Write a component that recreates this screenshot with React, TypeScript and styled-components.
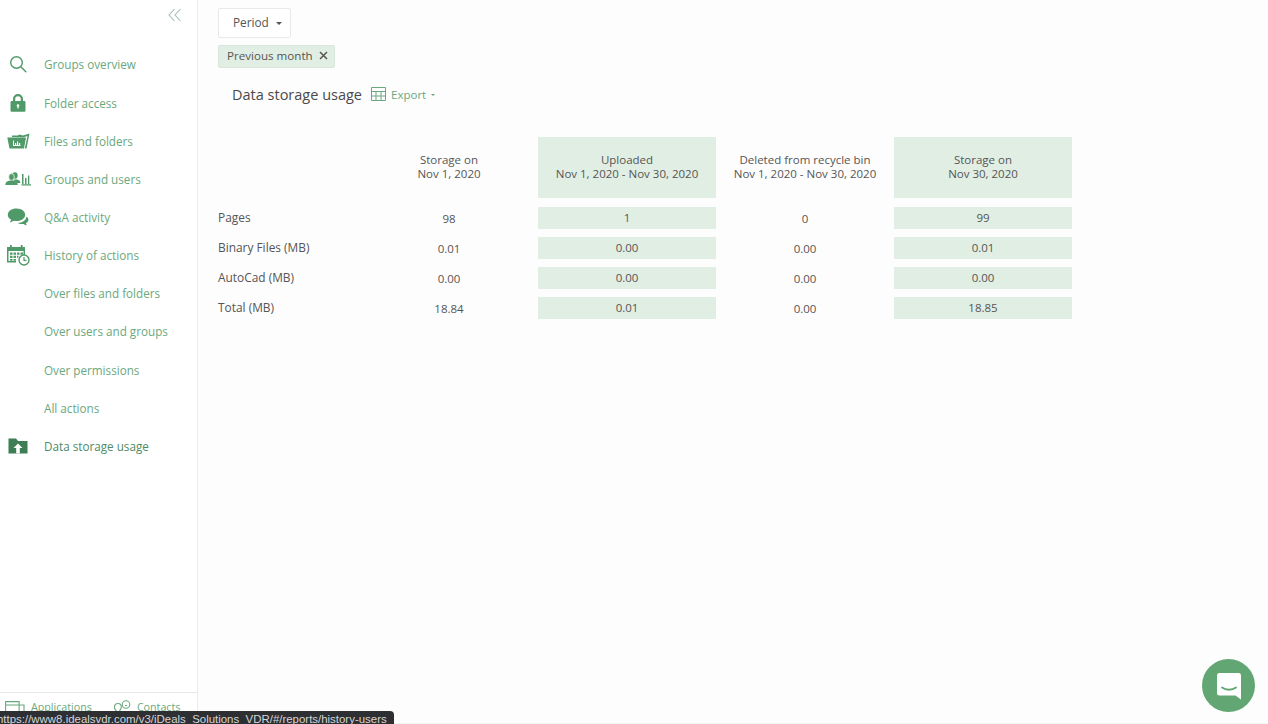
import React from "react"
import styled, { createGlobalStyle } from "styled-components"

const GlobalStyle = createGlobalStyle`
  html, body {
    margin: 0;
    height: 100%;
    overflow: hidden;
    background: #fdfdfd;
    font-family: "Open Sans", "Liberation Sans", sans-serif;
    color: #555;
  }
  #root {
    height: 100%;
  }
`

const Page = styled.div`
  display: flex;
  height: 724px;
  overflow: hidden;
`

const Sidebar = styled.aside`
  width: 197px;
  flex: none;
  display: flex;
  flex-direction: column;
  background: #fff;
  border-right: 1px solid #ececec;
`

const Collapse = styled.div`
  display: flex;
  justify-content: flex-end;
  height: 45.4px;
  padding: 8px 15px 0 0;
  box-sizing: border-box;
  color: #a3bfae;
`

const NavList = styled.nav`
  flex: 1;
  display: flex;
  flex-direction: column;
`

const NavRow = styled.div<{ $active?: boolean }>`
  display: flex;
  align-items: center;
  height: 38.15px;
  font-size: 11.7px;
  color: ${p => (p.$active ? "#4f8a63" : "#6aa87e")};
`

const NavIcon = styled.span`
  width: 44px;
  flex: none;
  display: flex;
  justify-content: center;
  padding-right: 8px;
  box-sizing: border-box;
  color: #4f9a68;
`

const SidebarFooter = styled.div`
  height: 32px;
  flex: none;
  display: flex;
  align-items: flex-start;
  gap: 21px;
  padding: 7px 0 0 5px;
  box-sizing: border-box;
  border-top: 1px solid #e8e8e8;
  font-size: 10.7px;
  color: #6aa87e;
`

const FooterItem = styled.span`
  display: inline-flex;
  align-items: center;
  gap: 6px;
`

const Main = styled.main`
  flex: 1;
  display: flex;
  flex-direction: column;
  align-items: flex-start;
  padding: 8px 0 0 20px;
  min-width: 0;
  box-sizing: border-box;
  border-bottom: 1px solid #f0f7f2;
`

const PeriodButton = styled.div`
  display: flex;
  align-items: center;
  gap: 7px;
  height: 30px;
  width: 73px;
  padding: 0 0 2px 14px;
  box-sizing: border-box;
  background: #fff;
  border: 1px solid #e9e9e9;
  border-radius: 2px;
  font-size: 11.8px;
`

const Caret = styled.span<{ $color?: string; $size?: number }>`
  display: inline-block;
  border-left: ${p => p.$size ?? 3.5}px solid transparent;
  border-right: ${p => p.$size ?? 3.5}px solid transparent;
  border-top: ${p => p.$size ?? 3.5}px solid ${p => p.$color ?? "#555"};
  margin-top: 2px;
`

const Tag = styled.div`
  display: flex;
  align-items: center;
  gap: 6px;
  height: 23px;
  margin-top: 7px;
  padding: 0 6px 2px 8px;
  box-sizing: border-box;
  background: #e1eee4;
  border: 1px solid #d8e6dc;
  border-radius: 2px;
  font-size: 11.6px;
`

const TitleRow = styled.div`
  display: flex;
  align-items: center;
  height: 24px;
  margin: 14px 0 0 14px;
`

const Title = styled.h2`
  margin: 0 9px 0 0;
  font-size: 14.5px;
  font-weight: 400;
  color: #4a4a4a;
`

const ExportLink = styled.span`
  display: inline-flex;
  align-items: center;
  gap: 5px;
  font-size: 11.5px;
  color: #6aa87e;
`

const Table = styled.div`
  display: grid;
  grid-template-columns: 142px repeat(4, 178px);
  grid-template-rows: 62px repeat(4, 22px);
  row-gap: 8px;
  margin-top: 31px;
  font-size: 11.5px;
`

const HeaderCell = styled.div<{ $hl?: boolean }>`
  display: flex;
  align-items: center;
  justify-content: center;
  text-align: center;
  line-height: 14px;
  padding-bottom: 2px;
  box-sizing: border-box;
  margin-bottom: 1px;
  background: ${p => (p.$hl ? "#e1eee4" : "transparent")};
`

const LabelCell = styled.div`
  display: flex;
  align-items: center;
  padding-bottom: 2px;
  font-size: 11.9px;
`

const ValueCell = styled.div<{ $hl?: boolean }>`
  display: flex;
  align-items: center;
  justify-content: center;
  background: ${p => (p.$hl ? "#e1eee4" : "transparent")};
  padding-bottom: ${p => (p.$hl ? "2px" : "0")};
`

const StatusBar = styled.div`
  position: fixed;
  left: 0;
  bottom: 0;
  width: 394px;
  height: 13px;
  background: #2d2f33;
  border-top-right-radius: 4px;
  color: #d6d6d6;
  font-family: "Liberation Sans", Arial, sans-serif;
  font-size: 11.45px;
  line-height: 17px;
  text-indent: -3px;
  white-space: nowrap;
  overflow: hidden;
`

const ChatButton = styled.div`
  position: fixed;
  right: 13px;
  bottom: 12px;
  width: 53px;
  height: 53px;
  border-radius: 50%;
  background: #62a674;
  display: flex;
  align-items: center;
  justify-content: center;
`

const SearchIcon = () => (
  <svg width="18" height="18" viewBox="0 0 18 18" fill="none" stroke="currentColor" strokeWidth="1.4">
    <circle cx="7.5" cy="7.5" r="5.8" />
    <path d="M11.8 11.8 16.8 16.8" strokeLinecap="round" />
  </svg>
)

const LockIcon = () => (
  <svg width="16" height="18" viewBox="0 0 16 18" fill="currentColor">
    <path d="M3 7V5a5 5 0 0 1 10 0v2h1.2c.7 0 1.3.6 1.3 1.3v8.2c0 .7-.6 1.3-1.3 1.3H1.8C1.100 17.800.5 17.200.5 16.500V8.300C.5 7.600 1.100 7 1.800 7H3Zm2.200 0h5.600V5a2.800 2.800 0 0 0-5.600 0v2Z" />
    <circle cx="8" cy="11.500" r="1.300" fill="#fff" />
    <rect x="7.400" y="11.500" width="1.200" height="3" fill="#fff" />
  </svg>
)

const FolderChartIcon = () => (
  <svg width="23" height="16" viewBox="0 0 23 16" fill="currentColor">
    <path d="M5 4V2.500h6L12 1.500l4 1 6.500-2L19.500 15.500H17.800L20.500 3 16.500 4.200 5 4Z" />
    <path d="M.3 4.500h18.700l-2 11H2.500L.3 4.500Z" />
    <path d="M6 7.500v5.500h7.500V12H7V7.500H6Zm2 2.500h1.200v2H8v-2Zm2-1.500h1.200V12H10V8.500Zm2 1.500h1.200v2H12v-2Z" fill="#fff" />
  </svg>
)

const UsersChartIcon = () => (
  <svg width="26" height="14" viewBox="0 0 26 14" fill="currentColor">
    <ellipse cx="10" cy="3.500" rx="2.600" ry="3.200" />
    <path d="M8 7.500h4c2 .5 3.200 1.300 3.400 3.500H12L8 7.500Z" />
    <ellipse cx="6.500" cy="5" rx="2.800" ry="3.400" stroke="#fff" strokeWidth="0.700" />
    <path d="M5 8.500h3c2.700.5 4.600 1.500 4.800 4.500H.3c.2-3 2-4 4.700-4.500Z" />
    <path d="M17 2h1.500v10H17V2Zm3 4h1.500v6H20V6Zm3-2.500h1.300V12H23V3.500ZM16.500 12.300H26V13.500H16.500Z" />
  </svg>
)

const ChatIcon = () => (
  <svg width="22" height="18" viewBox="0 0 22 18" fill="currentColor">
    <path d="M9.500.500C4.500.500.800 3.200.800 6.800c0 2.100 1.300 3.900 3.300 5-.2 1-.8 2-1.500 2.700 1.500-.2 3-.8 4.100-1.700.9.200 1.800.3 2.800.3 5 0 8.700-2.800 8.700-6.300S14.500.500 9.500.500Z" />
    <path d="M19.500 8.500c1.200.9 1.900 2 1.900 3.300 0 1.500-1 2.800-2.500 3.500.1.800.5 1.500 1.100 2-1.300-.1-2.500-.6-3.400-1.400-.6.100-1.200.2-1.800.2-1.600 0-3-.4-4-1.100 4.800-.2 8.500-3 8.700-6.500Z" />
  </svg>
)

const CalendarClockIcon = () => (
  <svg width="23" height="22" viewBox="0 0 23 22" fill="currentColor">
    <path d="M3 1h1.800v2h9V1h1.800v2H18v8h-1.500V7h-15v10H9v1.500H0V3h3V1Z" />
    <path d="M3 8.500h2.500v2.200H3V8.500Zm3.500 0H9v2.200H6.500V8.500Zm3.500 0h2.500v2.200H10V8.500Zm3.500 0H16v2.200h-2.500V8.500ZM3 11.700h2.500v2.200H3v-2.200Zm3.500 0H9v2.200H6.500v-2.200Zm3.500 0h1.500v1.500L10 13.900v-2.200ZM3 14.900h2.500v1.800H3v-1.800Zm3.500 0H9v1.800H6.500v-1.800Z" />
    <circle cx="17" cy="16" r="5" fill="none" stroke="currentColor" strokeWidth="1.400" />
    <path d="M17 13v3.300h2.500" fill="none" stroke="currentColor" strokeWidth="1.200" />
  </svg>
)

const FolderUploadIcon = () => (
  <svg width="20" height="16" viewBox="0 0 20 16" fill="#3f7d54">
    <path d="M.500.500h7.500l2 2.500h9.500v12.500H.500V.500Z" />
    <path d="M10 5.500 14.500 10H11.800v5.500H8.200V10H5.500L10 5.500Z" fill="#fff" />
  </svg>
)

const navItems: { label: string; icon?: React.ReactNode; active?: boolean }[] = [
  { label: "Groups overview", icon: <SearchIcon /> },
  { label: "Folder access", icon: <LockIcon /> },
  { label: "Files and folders", icon: <FolderChartIcon /> },
  { label: "Groups and users", icon: <UsersChartIcon /> },
  { label: "Q&A activity", icon: <ChatIcon /> },
  { label: "History of actions", icon: <CalendarClockIcon /> },
  { label: "Over files and folders" },
  { label: "Over users and groups" },
  { label: "Over permissions" },
  { label: "All actions" },
  { label: "Data storage usage", icon: <FolderUploadIcon />, active: true },
]

const rows = [
  { label: "Pages", values: ["98", "1", "0", "99"] },
  { label: "Binary Files (MB)", values: ["0.01", "0.00", "0.00", "0.01"] },
  { label: "AutoCad (MB)", values: ["0.00", "0.00", "0.00", "0.00"] },
  { label: "Total (MB)", values: ["18.84", "0.01", "0.00", "18.85"] },
]

export default function App() {
  return (
    <Page>
      <GlobalStyle />
      <Sidebar>
        <Collapse>
          <svg width="14" height="14" viewBox="0 0 14 14" fill="none" stroke="currentColor" strokeWidth="1.1">
            <path d="M6.500 1 1 7l5.500 6M12.500 1 7 7l5.500 6" />
          </svg>
        </Collapse>
        <NavList>
          {navItems.map(item => (
            <NavRow key={item.label} $active={item.active}>
              <NavIcon>{item.icon}</NavIcon>
              {item.label}
            </NavRow>
          ))}
        </NavList>
        <SidebarFooter>
          <FooterItem>
            <svg width="20" height="13" viewBox="0 0 20 13" fill="none" stroke="currentColor" strokeWidth="1.100">
              <path d="M.6.600h13.500v12H.6zM.6 4h13.500M14.100 4H19v8.400h-4.900" />
            </svg>
            Applications
          </FooterItem>
          <FooterItem>
            <svg width="18" height="14" viewBox="0 0 18 14" fill="none" stroke="currentColor" strokeWidth="1.100">
              <path d="M5 3.500C2.800 3.500 1.500 5 1.500 7S3 11 5 12s3 1 3.500 2M5 3.500C7 3.500 8.300 5 8.300 7S7 10 6.500 11" />
              <circle cx="13" cy="4.500" r="3.800" />
              <path d="M12 5.500h2" />
            </svg>
            Contacts
          </FooterItem>
        </SidebarFooter>
      </Sidebar>
      <Main>
        <PeriodButton>
          Period
          <Caret />
        </PeriodButton>
        <Tag>
          Previous month
          <svg width="9" height="9" viewBox="0 0 9 9" stroke="#555" strokeWidth="1.500">
            <path d="M1 1l7 7M8 1 1 8" />
          </svg>
        </Tag>
        <TitleRow>
          <Title>Data storage usage</Title>
          <ExportLink>
            <svg width="15" height="14" viewBox="0 0 15 14" fill="none" stroke="currentColor" strokeWidth="1">
              <path d="M.5.500h14v13H.5zM.5 4.500h14M.5 9h14M5 4.500v9M10 4.500v9" />
            </svg>
            Export
            <Caret $color="#6aa87e" $size={2.5} />
          </ExportLink>
        </TitleRow>
        <Table>
          <HeaderCell />
          <HeaderCell>
            Storage on
            <br />
            Nov 1, 2020
          </HeaderCell>
          <HeaderCell $hl>
            Uploaded
            <br />
            Nov 1, 2020 - Nov 30, 2020
          </HeaderCell>
          <HeaderCell>
            Deleted from recycle bin
            <br />
            Nov 1, 2020 - Nov 30, 2020
          </HeaderCell>
          <HeaderCell $hl>
            Storage on
            <br />
            Nov 30, 2020
          </HeaderCell>
          {rows.map(row => (
            <React.Fragment key={row.label}>
              <LabelCell>{row.label}</LabelCell>
              {row.values.map((value, i) => (
                <ValueCell key={i} $hl={i % 2 === 1}>
                  {value}
                </ValueCell>
              ))}
            </React.Fragment>
          ))}
        </Table>
      </Main>
      <StatusBar>https://www8.idealsvdr.com/v3/iDeals_Solutions_VDR/#/reports/history-users</StatusBar>
      <ChatButton>
        <svg width="24" height="28" viewBox="0 0 24 28" fill="#fff">
          <path d="M2.500 1h19A2.500 2.500 0 0 1 24 3.500V27.500l-5.500-4H2.500A2.500 2.500 0 0 1 0 21V3.500A2.500 2.500 0 0 1 2.500 1Z" />
          <path d="M5 15.500c4 3 10 3 14 0" fill="none" stroke="#62a674" strokeWidth="1.800" strokeLinecap="round" />
        </svg>
      </ChatButton>
    </Page>
  )
}
